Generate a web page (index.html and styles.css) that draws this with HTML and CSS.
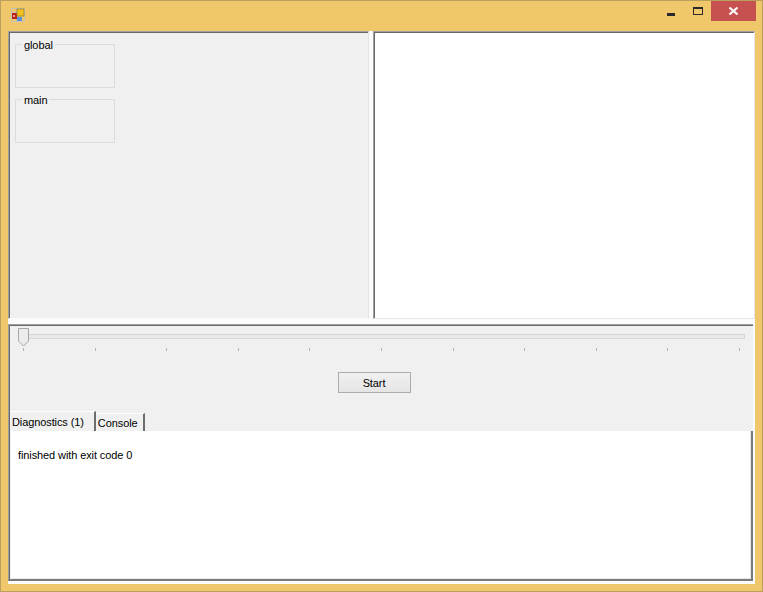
FILE: index.html
```html
<!doctype html>
<html>
    <head>
        <title>Debugger</title>
        <link rel="stylesheet" href="styles.css">
    </head>
    <body>
        <div class="window">
            <div class="titlebar">
                <svg class="app_icon" width="14" height="14" viewBox="0 0 14 14">
                    <path d="M0.5 0.5 H13.5 V13.5 H0.5 Z M0.5 4.5 H6 M5.5 0.5 V5 M0.5 9.5 H5 M5.5 10 V13.5" fill="none" stroke="#c8c4b4"/>
                    <rect x="1" y="5" width="5" height="6" fill="#b8231c"/>
                    <rect x="2" y="7" width="2" height="2" fill="#ef9c8c"/>
                    <rect x="6" y="1" width="7" height="7" fill="#f4c21c" stroke="#8a7420" stroke-width="0.7"/>
                    <rect x="6" y="9" width="5" height="4" fill="#5c8fdc"/>
                </svg>
                <div class="spacer"></div>
                <div class="win_button"><div class="min_icon"></div></div>
                <div class="win_button"><div class="max_icon"></div></div>
                <div class="close_button">
                    <svg width="9" height="8" viewBox="0 0 9 8">
                        <path d="M0.5 0.5 L8.5 7.5 M8.5 0.5 L0.5 7.5" stroke="#fff" stroke-width="2"/>
                    </svg>
                </div>
            </div>
            <div class="client">
                <div class="top_split">
                    <div class="left_panel">
                        <fieldset class="group"><legend>global</legend></fieldset>
                        <fieldset class="group"><legend>main</legend></fieldset>
                    </div>
                    <div class="right_panel"></div>
                </div>
                <div class="bottom_panel">
                    <div class="slider">
                        <div class="track"></div>
                        <svg class="thumb" width="12" height="19" viewBox="0 0 12 19">
                            <path d="M0.5 0.5 H10.5 V13 L5.5 18 L0.5 13 Z" fill="#ececec" stroke="#a6a6a6"/>
                        </svg>
                    </div>
                    <div class="ticks">
                        <i></i><i></i><i></i><i></i><i></i><i></i><i></i><i></i><i></i><i></i><i></i>
                    </div>
                    <div class="button_row">
                        <button class="start_button">Start</button>
                    </div>
                    <div class="tabs">
                        <div class="tab active">Diagnostics (1)</div>
                        <div class="tab">Console</div>
                    </div>
                    <div class="output">finished with exit code 0</div>
                </div>
            </div>
        </div>
    </body>
</html>
```
FILE: styles.css
```css
html, body {
    margin:0;
    height:100%;
    overflow:hidden;
}

body {
    font-family:"Liberation Sans", Arial, sans-serif;
    font-size:11px;
    letter-spacing:-0.1px;
    color:#000000;
}

.window {
    box-sizing:border-box;
    width:763px;
    height:592px;
    display:flex;
    flex-direction:column;
    background-color:#f0c76a;
    border:1px solid #b8a05c;
    padding:0 7px 7px 7px;
}

.titlebar {
    height:30px;
    flex:none;
    display:flex;
    align-items:flex-start;
}

.app_icon {
    margin:7px 0 0 3px;
}

.spacer {
    flex:1;
}

.win_button {
    width:27px;
    height:20px;
    display:flex;
    align-items:center;
    justify-content:center;
}

.min_icon {
    width:8px;
    height:3px;
    margin-top:6px;
    background-color:#2a2a2a;
}

.max_icon {
    box-sizing:border-box;
    width:10px;
    height:8px;
    margin-top:-1px;
    border:1px solid #2a2a2a;
    border-top-width:2px;
}

.close_button {
    width:45px;
    height:20px;
    margin-right:-1px;
    background-color:#c75050;
    display:flex;
    align-items:center;
    justify-content:center;
}

.client {
    flex:1;
    display:flex;
    flex-direction:column;
    gap:5px;
    background-color:#fbfbfb;
}

.top_split {
    height:288px;
    flex:none;
    display:flex;
    gap:4px;
}

.left_panel {
    box-sizing:border-box;
    width:361px;
    padding:6px 0 0 6px;
    background-color:#f0f0f0;
    border-top:1px solid #a0a0a0;
    border-left:1px solid #a0a0a0;
    border-right:1px solid #e4e4e4;
    border-bottom:1px solid #fbfbfb;
    box-shadow:inset 1px 1px 0 #696969;
}

.right_panel {
    flex:1;
    background-color:#ffffff;
    border-top:1px solid #a0a0a0;
    border-left:1px solid #a0a0a0;
    border-right:1px solid #e4e4e4;
    border-bottom:1px solid #e4e4e4;
    box-shadow:inset 1px 1px 0 #696969;
}

.group {
    box-sizing:border-box;
    display:block;
    width:100px;
    height:50px;
    margin:0 0 5px 0;
    padding:0 0 0 6px;
    border:1px solid #dcdcdc;
}

.group legend {
    padding:1px 2px 0 2px;
    line-height:12px;
}

.bottom_panel {
    flex:1;
    display:flex;
    flex-direction:column;
    margin:0 2px 3px 0;
    padding:1px 0 0 1px;
    border-top:1px solid #a0a0a0;
    border-left:1px solid #a0a0a0;
    border-bottom:2px solid #7a7a7a;
    background-color:#f0f0f0;
    box-shadow:inset 1px 1px 0 #696969;
}

.slider {
    position:relative;
    height:19px;
    margin:2px 8px 0 8px;
    display:flex;
    align-items:center;
}

.track {
    flex:1;
    height:3px;
    background-color:#e7eae7;
    border:1px solid #d6d6d6;
    margin-top:-3px;
}

.thumb {
    position:absolute;
    left:0;
    top:0;
}

.ticks {
    display:flex;
    justify-content:space-between;
    margin:1px 13px 0 13px;
}

.ticks i {
    display:block;
    width:1px;
    height:3px;
    background-color:#b4b4b4;
}

.button_row {
    display:flex;
    justify-content:center;
    margin-top:21px;
}

.start_button {
    width:73px;
    height:21px;
    margin-right:15px;
    padding:0;
    font-family:"Liberation Sans", Arial, sans-serif;
    font-size:11px;
    letter-spacing:-0.1px;
    color:#000000;
    background:linear-gradient(#f0f0f0, #e5e5e5);
    border:1px solid #acacac;
}

.tabs {
    display:flex;
    align-items:flex-end;
    height:20px;
    margin:18px 0 0 0;
}

.tab {
    box-sizing:border-box;
    height:18px;
    padding:2px 5px 0 2px;
    line-height:15px;
    border-top:1px solid #ffffff;
    border-right:2px solid #6d6d6d;
}

.tab.active {
    height:20px;
    padding:3px 10px 0 2px;
}

.output {
    flex:1;
    margin:0 0 0 1px;
    padding:17px 6px;
    line-height:14px;
    background-color:#ffffff;
    border-right:2px solid #7a7a7a;
    border-left:1px solid #ffffff;
    box-shadow:inset -1px -1px 0 #e8e8e8;
}
```
